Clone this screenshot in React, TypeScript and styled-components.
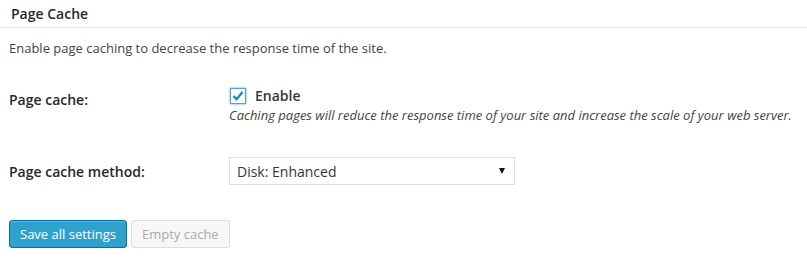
import styled, { createGlobalStyle } from 'styled-components';

const GlobalStyle = createGlobalStyle`
  body {
    margin: 0;
    background: #fff;
    font-family: "Open Sans", "Liberation Sans", sans-serif;
    font-size: 13px;
    color: #444;
  }
`;

const Page = styled.div`
  width: 807px;
  height: 264px;
  overflow: hidden;
`;

const Header = styled.h3`
  margin: 0;
  padding: 4px 11px 0;
  height: 23px;
  border-bottom: 1px solid #e5e5e5;
  font-size: 14px;
  font-weight: 600;
  color: #23282d;
  line-height: 19px;
`;

const Body = styled.div`
  padding: 10px 9px 0;
`;

const Intro = styled.p`
  margin: 0 0 24px;
  line-height: 20px;
`;

const Row = styled.div<{ $gap?: number }>`
  display: flex;
  align-items: flex-start;
  margin-bottom: ${p => p.$gap ?? 0}px;
`;

const Label = styled.div<{ $top?: number }>`
  width: 220px;
  flex-shrink: 0;
  font-size: 14px;
  font-weight: 600;
  color: #23282d;
  padding-top: ${p => p.$top ?? 0}px;
  line-height: 20px;
`;

const Field = styled.div`
  display: flex;
  flex-direction: column;
  padding-top: 4px;
`;

const CheckLine = styled.label`
  display: flex;
  align-items: center;
  gap: 9px;
  font-size: 14px;
  font-weight: 600;
  color: #32373c;
  line-height: 20px;
`;

const Box = styled.span`
  width: 14px;
  height: 14px;
  border: 1px solid #5b9dd9;
  background: #fff;
  box-shadow: 0 0 2px rgba(30, 140, 190, 0.8);
  display: flex;
  align-items: center;
  justify-content: center;
  margin-left: 1px;
`;

const Hint = styled.span`
  font-style: italic;
  color: #444;
  font-size: 13px;
  line-height: 18px;
`;

const Select = styled.div`
  height: 26px;
  border: 1px solid #ddd;
  box-sizing: content-box;
  display: flex;
  align-items: center;
  justify-content: space-between;
  padding: 0 0 0 7px;
  width: 277px;
  font-size: 14px;
  color: #32373c;
  background: #fff;
`;

const Arrow = styled.span`
  width: 0;
  height: 0;
  border-left: 3px solid transparent;
  border-right: 3px solid transparent;
  border-top: 6px solid #111;
  margin-right: 9px;
`;

const Buttons = styled.div`
  display: flex;
  gap: 4px;
`;

const Button = styled.button<{ $primary?: boolean }>`
  font-family: inherit;
  font-size: 13px;
  height: 28px;
  padding: 0 10px;
  border-radius: 3px;
  border: 1px solid ${p => (p.$primary ? '#0074a2' : '#ddd')};
  background: ${p => (p.$primary ? '#2ea2cc' : '#f7f7f7')};
  color: ${p => (p.$primary ? '#fff' : '#aaa')};
  box-shadow: ${p => (p.$primary ? 'inset 0 1px 0 rgba(120,200,230,0.5)' : 'none')};
  cursor: pointer;
`;

export default function App() {
  return (
    <Page>
      <GlobalStyle />
      <Header>Page Cache</Header>
      <Body>
        <Intro>Enable page caching to decrease the response time of the site.</Intro>
        <Row $gap={33}>
          <Label $top={8}>Page cache:</Label>
          <Field>
            <CheckLine>
              <Box>
                <svg width="12" height="12" viewBox="0 0 12 12">
                  <path d="M1.5 6.2 L4.6 9.2 L10.5 2" fill="none" stroke="#1e8cbe" strokeWidth="2.4" />
                </svg>
              </Box>
              Enable
            </CheckLine>
            <Hint>Caching pages will reduce the response time of your site and increase the scale of your web server.</Hint>
          </Field>
        </Row>
        <Row $gap={35}>
          <Label $top={5}>Page cache method:</Label>
          <Select>
            Disk: Enhanced
            <Arrow />
          </Select>
        </Row>
        <Buttons>
          <Button $primary>Save all settings</Button>
          <Button disabled>Empty cache</Button>
        </Buttons>
      </Body>
    </Page>
  );
}
